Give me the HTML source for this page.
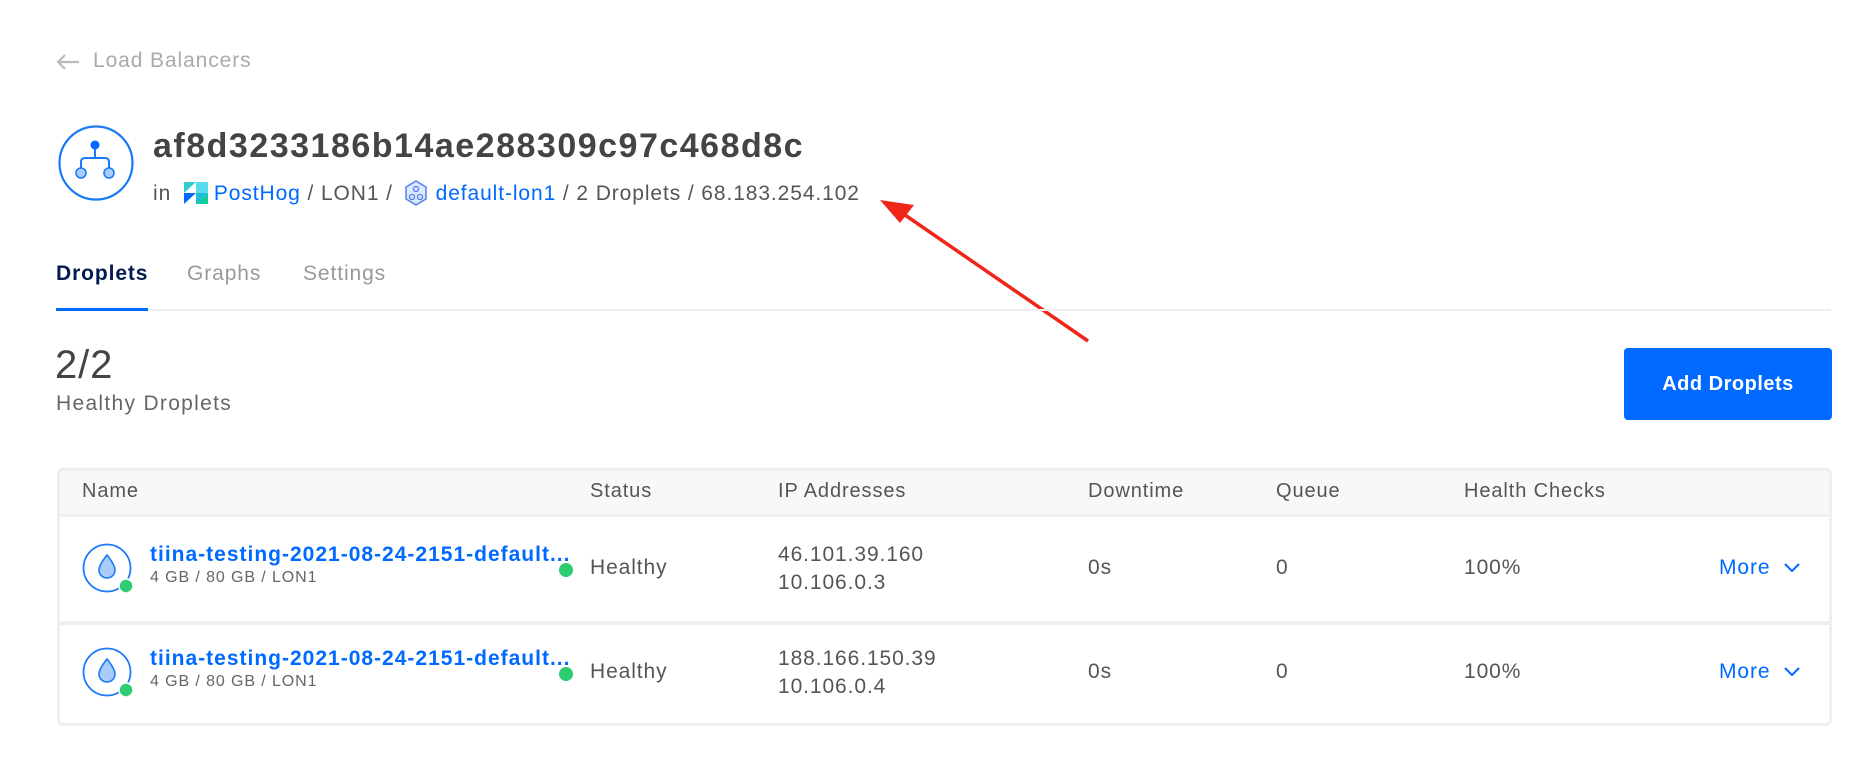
<!DOCTYPE html>
<html><head><meta charset="utf-8"><style>
*{margin:0;padding:0;box-sizing:border-box}
body{width:1864px;height:758px;background:#fff;font-family:"Liberation Sans",sans-serif;position:relative;overflow:hidden;color:#444;letter-spacing:0.9px}
.a{position:absolute;white-space:nowrap}
.hd{font-size:20px;color:#555;top:480px}
.cell{font-size:21px;color:#555}
.blue{color:#0069ff}
</style></head><body>
<svg class="a" style="left:55px;top:52px" width="26" height="20" viewBox="0 0 26 20"><path d="M24 10H3M10 3L3 10l7 7" fill="none" stroke="#bbb" stroke-width="2.2"/></svg>
<div class="a" style="left:93px;top:49px;font-size:21px;color:#aaa">Load Balancers</div>

<svg class="a" style="left:57px;top:124px" width="78" height="78" viewBox="0 0 78 78"><circle cx="39" cy="39" r="36.5" fill="none" stroke="#1a7af8" stroke-width="2.2"/><circle cx="38" cy="21" r="4.5" fill="#0069ff"/><path d="M38 25v9M24 44v-6q0-4 4-4h20q4 0 4 4v6" fill="none" stroke="#1a7af8" stroke-width="2"/><circle cx="24" cy="49" r="5" fill="#a9ccfc" stroke="#1a7af8" stroke-width="1.6"/><circle cx="52" cy="49" r="5" fill="#a9ccfc" stroke="#1a7af8" stroke-width="1.6"/></svg>
<div class="a" style="left:153px;top:127px;font-size:34px;font-weight:bold;color:#444;letter-spacing:1.5px">af8d3233186b14ae288309c97c468d8c</div>
<div class="a" style="left:153px;top:180px;font-size:21px;color:#555;letter-spacing:0.9px">in <svg width="24" height="22" viewBox="0 0 24 22" style="vertical-align:-4px;margin:0 6px"><path d="M0 11h12L0 22z" fill="#0069ff"/><path d="M0 0h12L0 11z" fill="#3cc"/><path d="M12 0h12v11H12z" fill="#5de"/><path d="M12 11h12L12 22z" fill="#2bd"/><path d="M24 11v11H12z" fill="#1c9"/></svg><span class="blue">PostHog</span> / LON1 / <svg width="24" height="26" viewBox="0 0 24 26" style="vertical-align:-6px;margin:0 8px 0 4px"><path d="M12 1l10 6v12l-10 6L2 19V7z" fill="#dbe7ff" stroke="#5580e8" stroke-width="1.5"/><circle cx="12" cy="9" r="2.5" fill="none" stroke="#5580e8" stroke-width="1.3"/><circle cx="8" cy="17" r="2.5" fill="none" stroke="#5580e8" stroke-width="1.3"/><circle cx="16" cy="17" r="2.5" fill="none" stroke="#5580e8" stroke-width="1.3"/></svg><span class="blue">default-lon1</span> / 2 Droplets / 68.183.254.102</div>

<svg class="a" style="left:0;top:0" width="1864" height="758"><line x1="1088" y1="341" x2="905" y2="215" stroke="#f0261b" stroke-width="3.5"/><path d="M880 200l34 5-14 18z" fill="#f0261b"/></svg>

<div class="a" style="left:56px;top:262px;font-size:21px;font-weight:bold;color:#031b4e">Droplets</div>
<div class="a" style="left:187px;top:262px;font-size:21px;color:#999">Graphs</div>
<div class="a" style="left:303px;top:262px;font-size:21px;color:#999">Settings</div>
<div class="a" style="left:56px;top:309px;width:1775px;height:2px;background:#eee"></div>
<div class="a" style="left:56px;top:308px;width:92px;height:3px;background:#0069ff"></div>

<div class="a" style="left:55px;top:343px;font-size:40px;color:#444">2/2</div>
<div class="a" style="left:56px;top:392px;font-size:21px;color:#666;letter-spacing:1.3px">Healthy Droplets</div>
<div class="a" style="left:1624px;top:348px;width:208px;height:72px;background:#0069ff;border-radius:4px;color:#fff;font-size:20px;font-weight:bold;text-align:center;line-height:72px;letter-spacing:0.5px">Add Droplets</div>

<div class="a" style="left:57px;top:468px;width:1775px;height:258px;border:3px solid #efefef;border-radius:6px;overflow:hidden">
<div style="height:46px;background:#f8f8f8;border-bottom:3px solid #efefef"></div>
<div style="position:absolute;top:150px;left:0;right:0;height:4px;background:#efefef"></div>
</div>
<div class="a hd" style="left:82px">Name</div>
<div class="a hd" style="left:590px">Status</div>
<div class="a hd" style="left:778px">IP Addresses</div>
<div class="a hd" style="left:1088px">Downtime</div>
<div class="a hd" style="left:1276px">Queue</div>
<div class="a hd" style="left:1464px">Health Checks</div>

<svg class="a" style="left:82px;top:542px" width="52" height="52" viewBox="0 0 52 52"><circle cx="25" cy="26" r="23.5" fill="none" stroke="#1a7af8" stroke-width="1.8"/><path d="M25 13q-8 10-8 15a8 8 0 0016 0q0-5-8-15z" fill="#a9ccfc" stroke="#1a7af8" stroke-width="1.6"/><circle cx="44" cy="44" r="7" fill="#2ecc71" stroke="#fff" stroke-width="1.5"/></svg>
<div class="a" style="left:150px;top:543px;font-size:21px;font-weight:bold;color:#0069ff;letter-spacing:1px">tiina-testing-2021-08-24-2151-default...</div>
<div class="a" style="left:150px;top:569px;font-size:16px;color:#666">4 GB / 80 GB / LON1</div>
<div class="a" style="left:559px;top:563px;width:14px;height:14px;border-radius:50%;background:#2ecc71"></div>
<div class="a cell" style="left:590px;top:556px">Healthy</div>
<div class="a cell" style="left:778px;top:543px">46.101.39.160</div>
<div class="a cell" style="left:778px;top:571px">10.106.0.3</div>
<div class="a cell" style="left:1088px;top:556px">0s</div>
<div class="a cell" style="left:1276px;top:556px">0</div>
<div class="a cell" style="left:1464px;top:556px">100%</div>
<div class="a cell blue" style="left:1719px;top:556px">More <svg width="18" height="12" viewBox="0 0 18 12" style="margin-left:6px"><path d="M2 2l7 7 7-7" fill="none" stroke="#0069ff" stroke-width="2"/></svg></div>

<svg class="a" style="left:82px;top:646px" width="52" height="52" viewBox="0 0 52 52"><circle cx="25" cy="26" r="23.5" fill="none" stroke="#1a7af8" stroke-width="1.8"/><path d="M25 13q-8 10-8 15a8 8 0 0016 0q0-5-8-15z" fill="#a9ccfc" stroke="#1a7af8" stroke-width="1.6"/><circle cx="44" cy="44" r="7" fill="#2ecc71" stroke="#fff" stroke-width="1.5"/></svg>
<div class="a" style="left:150px;top:647px;font-size:21px;font-weight:bold;color:#0069ff;letter-spacing:1px">tiina-testing-2021-08-24-2151-default...</div>
<div class="a" style="left:150px;top:673px;font-size:16px;color:#666">4 GB / 80 GB / LON1</div>
<div class="a" style="left:559px;top:667px;width:14px;height:14px;border-radius:50%;background:#2ecc71"></div>
<div class="a cell" style="left:590px;top:660px">Healthy</div>
<div class="a cell" style="left:778px;top:647px">188.166.150.39</div>
<div class="a cell" style="left:778px;top:675px">10.106.0.4</div>
<div class="a cell" style="left:1088px;top:660px">0s</div>
<div class="a cell" style="left:1276px;top:660px">0</div>
<div class="a cell" style="left:1464px;top:660px">100%</div>
<div class="a cell blue" style="left:1719px;top:660px">More <svg width="18" height="12" viewBox="0 0 18 12" style="margin-left:6px"><path d="M2 2l7 7 7-7" fill="none" stroke="#0069ff" stroke-width="2"/></svg></div>
</body></html>
